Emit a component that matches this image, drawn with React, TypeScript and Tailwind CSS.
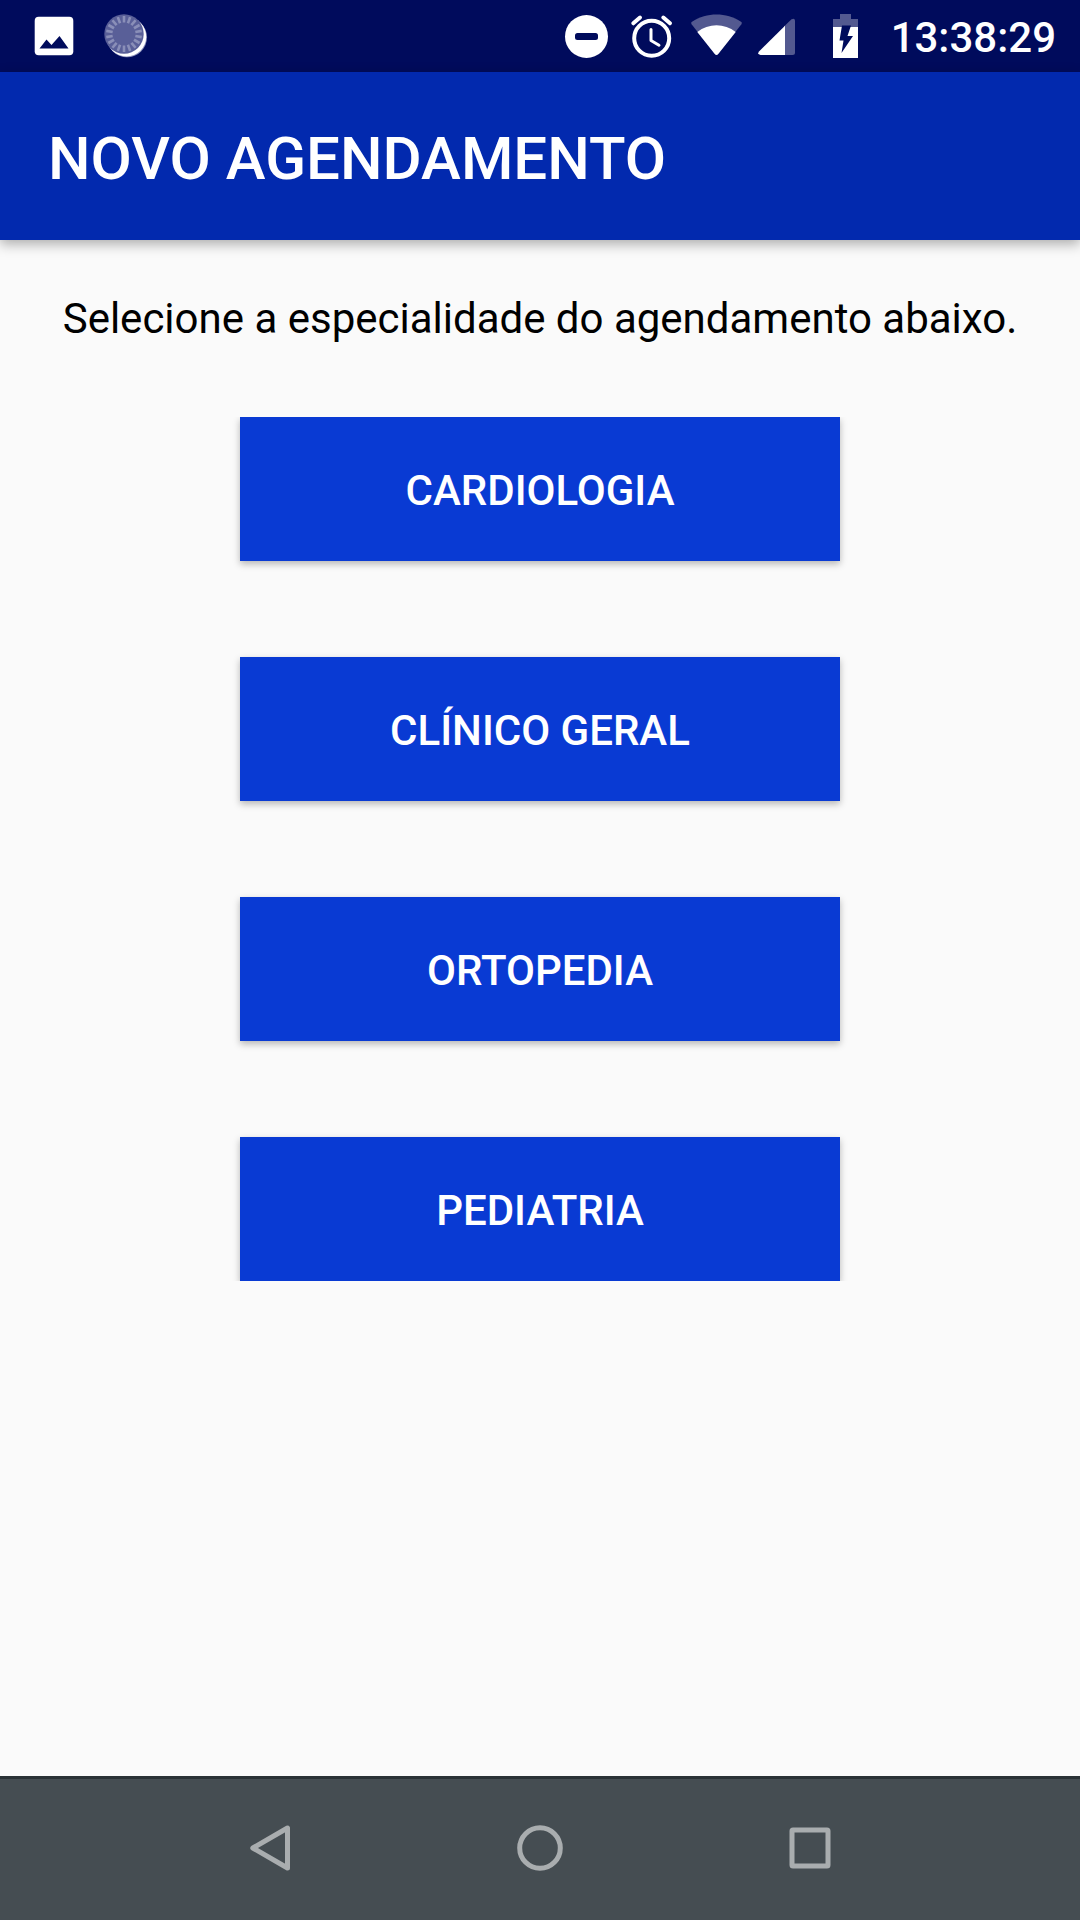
import React from "react";

const specialties = ["CARDIOLOGIA", "CLÍNICO GERAL", "ORTOPEDIA", "PEDIATRIA"];

const tickAngles = Array.from({ length: 18 }, (_, i) => i * 20);

function ImageIcon() {
  return (
    <svg className="h-12 w-12" viewBox="0 0 48 48" aria-hidden="true">
      <rect x="4.7" y="4.7" width="38.6" height="38.6" rx="4" fill="#fff" />
      <path d="M9.5 36.5 L16.5 27.5 L21.5 33 L29.5 24 L38.5 36.5 Z" fill="#000b5c" />
    </svg>
  );
}

function SyncIcon() {
  return (
    <svg className="h-12 w-12" viewBox="0 0 48 48" aria-hidden="true">
      <circle cx="25" cy="25.3" r="20" fill="#8d92bc" />
      <circle cx="24.5" cy="24.8" r="19.7" fill="#fff" />
      <circle cx="22" cy="22" r="19.7" fill="#595f98" />
      <g stroke="#8a8fb8" strokeWidth="2.6">
        {tickAngles.map((a) => (
          <path key={a} d="M22 4 V10.5" transform={`rotate(${a} 22 22)`} />
        ))}
      </g>
    </svg>
  );
}

function DoNotDisturbIcon() {
  return (
    <svg className="h-12 w-[54px]" viewBox="0 0 54 48" aria-hidden="true">
      <circle cx="27.5" cy="24.5" r="21.5" fill="#fff" />
      <rect x="16" y="21" width="23" height="7" rx="2.5" fill="#000b5c" />
    </svg>
  );
}

function AlarmIcon() {
  return (
    <svg className="h-12 w-[54px]" viewBox="0 0 54 48" aria-hidden="true" fill="none" stroke="#fff" strokeLinecap="round">
      <circle cx="26.7" cy="26.3" r="17.5" strokeWidth="4" />
      <path d="M26 17.5 V28.5 L34 33.2" strokeWidth="3" strokeLinejoin="round" />
      <path d="M8.3 11.3 L15 5.6 M45 11.3 L38.3 5.6" strokeWidth="4" />
    </svg>
  );
}

function WifiIcon() {
  return (
    <svg className="h-12 w-[54px]" viewBox="0 0 54 48" aria-hidden="true">
      <path d="M0.6 12.2 Q-0.4 10.8 1 9.8 C16 0.2 35 0.2 50 9.8 Q51.4 10.8 50.4 12.2 L27 42.2 Q25.5 43.8 24 42.2 Z" fill="#535990" />
      <path d="M6.3 20 C17.5 11 33.5 11 44.7 20 L27 42.2 Q25.5 43.8 24 42.2 Z" fill="#fff" />
    </svg>
  );
}

function SignalIcon() {
  return (
    <svg className="h-12 w-[54px]" viewBox="0 0 54 48" aria-hidden="true">
      <path d="M27 14.5 L34.5 7.3 Q37.7 5.5 38 8.5 V40.5 Q38 43 35.5 43 H27 Z" fill="#535990" />
      <path d="M28 13.7 V43 H3.5 Q0 42.5 2 39.5 Z" fill="#fff" />
    </svg>
  );
}

function BatteryIcon() {
  return (
    <svg className="h-12 w-[54px]" viewBox="0 0 54 48" aria-hidden="true">
      <path d="M10 7 H17 V2 H28 V7 H35 V15 H10 Z" fill="#535990" />
      <rect x="10" y="15" width="25" height="31" fill="#fff" />
      <path d="M19 13.5 H28 L24.5 24 H30 L18.5 41 L20.5 28.5 H16.5 Z" fill="#000b5c" />
    </svg>
  );
}

export default function App() {
  return (
    <div className="flex min-h-screen flex-col bg-[#fafafa] font-[Roboto,sans-serif] text-black">
      <div className="flex h-[72px] shrink-0 items-center justify-between bg-[#000b5c] pr-6 pl-[30px] text-white">
        <div className="flex items-center gap-6">
          <ImageIcon />
          <SyncIcon />
        </div>
        <div className="flex items-center gap-[14px]">
          <div className="flex items-center gap-3">
            <DoNotDisturbIcon />
            <AlarmIcon />
            <WifiIcon />
            <SignalIcon />
            <BatteryIcon />
          </div>
          <time className="pt-1 text-[42px] leading-[48px] font-medium">13:38:29</time>
        </div>
      </div>

      <header className="flex h-[168px] shrink-0 items-center bg-[#0229ae] px-12 pt-1.5 shadow-[0_4px_12px_rgba(0,0,0,0.32)]">
        <h1 className="text-[60px] leading-[72px] font-medium text-white">NOVO AGENDAMENTO</h1>
      </header>

      <main className="flex flex-1 flex-col items-center pt-[53px]">
        <p className="text-center text-[42px] leading-[52px]">Selecione a especialidade do agendamento abaixo.</p>
        <ul className="mt-[72px] flex w-[600px] max-w-full flex-col gap-24 overflow-y-clip">
          {specialties.map((name) => (
            <li key={name}>
              <button
                type="button"
                className="flex h-36 w-full items-center justify-center bg-[#093ad3] pt-1 text-[42px] leading-[48px] font-medium text-white shadow-[0_3px_7px_rgba(0,0,0,0.28)]"
              >
                {name}
              </button>
            </li>
          ))}
        </ul>
      </main>

      <nav className="flex h-36 shrink-0 justify-center border-t-[3px] border-[#2a3236] bg-[#454d52] text-[#a9adaf]">
        <button type="button" aria-label="Voltar" className="flex w-1/4 items-center justify-center">
          <svg className="h-12 w-12 overflow-visible" viewBox="0 0 48 48" fill="none" stroke="currentColor" strokeWidth="5" strokeLinejoin="round">
            <path d="M41.5 2 V42 L6.8 22 Z" />
          </svg>
        </button>
        <button type="button" aria-label="Início" className="flex w-1/4 items-center justify-center">
          <svg className="h-12 w-12 overflow-visible" viewBox="0 0 48 48" fill="none" stroke="currentColor" strokeWidth="5">
            <circle cx="24" cy="22" r="20.3" />
          </svg>
        </button>
        <button type="button" aria-label="Recentes" className="flex w-1/4 items-center justify-center">
          <svg className="h-12 w-12 overflow-visible" viewBox="0 0 48 48" fill="none" stroke="currentColor" strokeWidth="5" strokeLinejoin="round">
            <rect x="6" y="4" width="36" height="36" rx="1" />
          </svg>
        </button>
      </nav>
    </div>
  );
}
